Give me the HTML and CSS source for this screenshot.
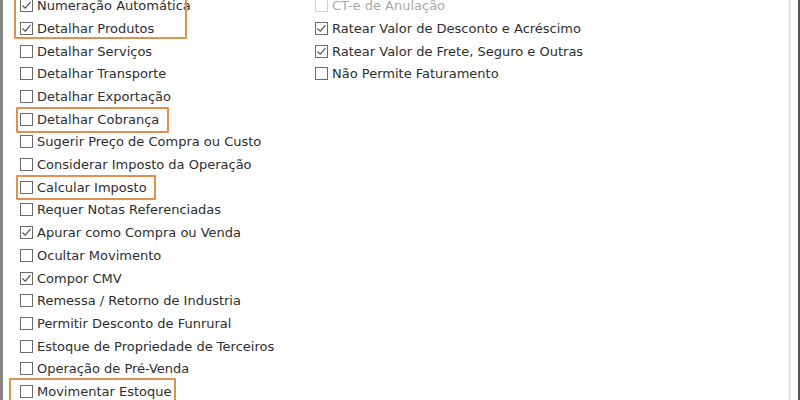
FILE: index.html
```html
<!DOCTYPE html>
<html lang="pt-BR">
<head>
    <meta charset="UTF-8">
    <title>Opções da Operação</title>
    <link rel="stylesheet" href="styles.css">
</head>
<body>
    <div class="frame">
        <div class="options">
            <!-- Left column -->
            <div class="col">
                <label class="opt"><span class="box on"><svg viewBox="0 0 13 13"><polyline points="2.5,6.5 5.2,9.2 10.5,3.2"/></svg></span>Numeração Automática</label>
                <label class="opt"><span class="box on"><svg viewBox="0 0 13 13"><polyline points="2.5,6.5 5.2,9.2 10.5,3.2"/></svg></span>Detalhar Produtos</label>
                <label class="opt"><span class="box"></span>Detalhar Serviços</label>
                <label class="opt"><span class="box"></span>Detalhar Transporte</label>
                <label class="opt"><span class="box"></span>Detalhar Exportação</label>
                <label class="opt"><span class="box"></span>Detalhar Cobrança</label>
                <label class="opt"><span class="box"></span>Sugerir Preço de Compra ou Custo</label>
                <label class="opt"><span class="box"></span>Considerar Imposto da Operação</label>
                <label class="opt"><span class="box"></span>Calcular Imposto</label>
                <label class="opt"><span class="box"></span>Requer Notas Referenciadas</label>
                <label class="opt"><span class="box on"><svg viewBox="0 0 13 13"><polyline points="2.5,6.5 5.2,9.2 10.5,3.2"/></svg></span>Apurar como Compra ou Venda</label>
                <label class="opt"><span class="box"></span>Ocultar Movimento</label>
                <label class="opt"><span class="box on"><svg viewBox="0 0 13 13"><polyline points="2.5,6.5 5.2,9.2 10.5,3.2"/></svg></span>Compor CMV</label>
                <label class="opt"><span class="box"></span>Remessa / Retorno de Industria</label>
                <label class="opt"><span class="box"></span>Permitir Desconto de Funrural</label>
                <label class="opt"><span class="box"></span>Estoque de Propriedade de Terceiros</label>
                <label class="opt"><span class="box"></span>Operação de Pré-Venda</label>
                <label class="opt"><span class="box"></span>Movimentar Estoque</label>
            </div>
            <!-- Right column -->
            <div class="col">
                <label class="opt disabled"><span class="box"></span>CT-e de Anulação</label>
                <label class="opt"><span class="box on"><svg viewBox="0 0 13 13"><polyline points="2.5,6.5 5.2,9.2 10.5,3.2"/></svg></span>Ratear Valor de Desconto e Acréscimo</label>
                <label class="opt"><span class="box on"><svg viewBox="0 0 13 13"><polyline points="2.5,6.5 5.2,9.2 10.5,3.2"/></svg></span>Ratear Valor de Frete, Seguro e Outras</label>
                <label class="opt"><span class="box"></span>Não Permite Faturamento</label>
            </div>
        </div>

        <!-- annotation marks -->
        <div class="mark mark-1"></div>
        <div class="mark mark-2"></div>
        <div class="mark mark-3"></div>
        <div class="mark mark-4"></div>

        <div class="scroll-edge"></div>
    </div>
</body>
</html>
```

FILE: styles.css
```css
html, body {
    margin: 0;
    padding: 0;
    background-color: #fff;
}
.frame {
    position: relative;
    width: 800px;
    height: 400px;
    box-sizing: border-box;
    border-left: 3px solid #858585;
    border-right: 2px solid #555;
    overflow: hidden;
    font-family: "DejaVu Sans", Verdana, sans-serif;
    font-size: 13px;
    color: #2e2e2e;
}
.options {
    display: grid;
    grid-template-columns: 295px 1fr;
    padding-left: 17px;
    margin-top: -5.6px;
}
.col {
    display: flex;
    flex-direction: column;
}
.opt {
    display: flex;
    align-items: center;
    gap: 4px;
    height: 22.7px;
    white-space: nowrap;
}
.box {
    width: 13px;
    height: 13px;
    box-sizing: border-box;
    border: 1px solid #6a6a6a;
    background-color: #fff;
    flex-shrink: 0;
    position: relative;
}
.box svg {
    position: absolute;
    left: -1px;
    top: -1px;
    width: 13px;
    height: 13px;
}
.box polyline {
    fill: none;
    stroke: #4a4a4a;
    stroke-width: 1.1;
}
.disabled {
    color: #a8a8a8;
}
.disabled .box {
    border-color: #d0d0d0;
}
.mark {
    position: absolute;
    box-sizing: border-box;
    border: 2px solid #e0914f;
    border-radius: 1px;
}
.mark-1 {
    left: 11px;
    top: -5px;
    width: 173px;
    height: 44px;
}
.mark-2 {
    left: 13px;
    top: 107px;
    width: 153px;
    height: 26px;
}
.mark-3 {
    left: 13px;
    top: 175px;
    width: 140px;
    height: 25px;
}
.mark-4 {
    left: 6px;
    top: 378px;
    width: 167px;
    height: 30px;
}
.scroll-edge {
    position: absolute;
    top: 0;
    bottom: 0;
    left: 785px;
    width: 3px;
    background-color: #e6e6e6;
}
```
